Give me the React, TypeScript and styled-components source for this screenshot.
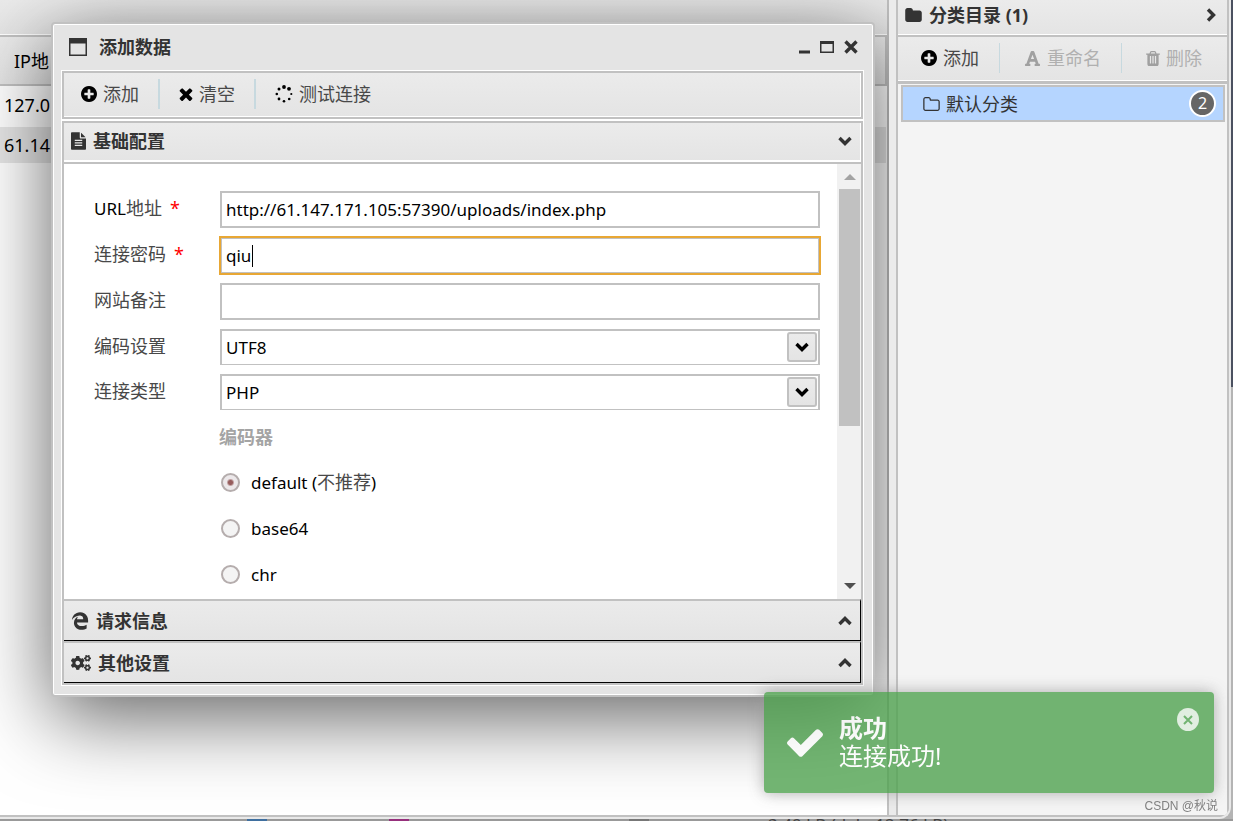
import React from 'react';
import styled, { createGlobalStyle, css } from 'styled-components';
import { FaCogs, FaEdgeLegacy, FaFont } from 'react-icons/fa';

const line = '#c1c1c1';
const ink = '#333333';
const soft = '#484848';
const chrome = 'linear-gradient(#ebebeb, #e4e4e4)';

const GlobalStyle = createGlobalStyle`
  *, *::before, *::after { box-sizing: border-box; }
  body {
    margin: 0;
    color: #000;
    font-family: "Noto Sans", "Noto Sans CJK SC", sans-serif;
    font-size: 17px;
    line-height: 24px;
  }
  button, input, select { font: inherit; color: inherit; margin: 0; }
  button { background: none; border: 0; padding: 0; }
`;

/* ---------- icons ---------- */

const paths = {
  plus: 'M1344 960v-128q0-26-19-45t-45-19h-256v-256q0-26-19-45t-45-19h-128q-26 0-45 19t-19 45v256h-256q-26 0-45 19t-19 45v128q0 26 19 45t45 19h256v256q0 26 19 45t45 19h128q26 0 45-19t19-45v-256h256q26 0 45-19t19-45zm320-64q0 209-103 385.500t-279.500 279.500-385.500 103-385.500-103-279.500-279.500-103-385.500 103-385.500 279.500-279.500 385.500-103 385.500 103 279.500 279.500 103 385.500z',
  times: 'M1490 1322q0 40-28 68l-136 136q-28 28-68 28t-68-28l-294-294-294 294q-28 28-68 28t-68-28l-136-136q-28-28-28-68t28-68l294-294-294-294q-28-28-28-68t28-68l136-136q28-28 68-28t68 28l294 294 294-294q28-28 68-28t68 28l136 136q28 28 28 68t-28 68l-294 294 294 294q28 28 28 68z',
  folder: 'M1728 608v704q0 92-66 158t-158 66h-1216q-92 0-158-66t-66-158v-960q0-92 66-158t158-66h320q92 0 158 66t66 158v32h672q92 0 158 66t66 158z',
  folderOpen: 'M1600 1312v-704q0-40-28-68t-68-28h-704q-40 0-68-28t-28-68v-64q0-40-28-68t-68-28h-320q-40 0-68 28t-28 68v960q0 40 28 68t68 28h1216q40 0 68-28t28-68zm128-704v704q0 92-66 158t-158 66h-1216q-92 0-158-66t-66-158v-960q0-92 66-158t158-66h320q92 0 158 66t66 158v32h672q92 0 158 66t66 158z',
  file: 'M1596 476q14 14 28 36h-472v-472q22 14 36 28zm-476 164h544v1056q0 40-28 68t-68 28h-1344q-40 0-68-28t-28-68v-1600q0-40 28-68t68-28h800v544q0 40 28 68t68 28zm160 736v-64q0-14-9-23t-23-9h-704q-14 0-23 9t-9 23v64q0 14 9 23t23 9h704q14 0 23-9t9-23zm0-256v-64q0-14-9-23t-23-9h-704q-14 0-23 9t-9 23v64q0 14 9 23t23 9h704q14 0 23-9t9-23zm0-256v-64q0-14-9-23t-23-9h-704q-14 0-23 9t-9 23v64q0 14 9 23t23 9h704q14 0 23-9t9-23z',
  trash: 'M704 1376v-704q0-14-9-23t-23-9h-64q-14 0-23 9t-9 23v704q0 14 9 23t23 9h64q14 0 23-9t9-23zm256 0v-704q0-14-9-23t-23-9h-64q-14 0-23 9t-9 23v704q0 14 9 23t23 9h64q14 0 23-9t9-23zm256 0v-704q0-14-9-23t-23-9h-64q-14 0-23 9t-9 23v704q0 14 9 23t23 9h64q14 0 23-9t9-23zm-544-992h448l-48-117q-7-9-17-11h-317q-10 2-17 11zm928 32v64q0 14-9 23t-23 9h-96v948q0 83-47 143.500t-113 60.500h-832q-66 0-113-58.500t-47-141.500v-952h-96q-14 0-23-9t-9-23v-64q0-14 9-23t23-9h309l70-167q15-37 54-63t79-26h320q40 0 79 26t54 63l70 167h309q14 0 23 9t9 23z',
  check: 'M1671 566q0 40-28 68l-724 724-136 136q-28 28-68 28t-68-28l-136-136-362-362q-28-28-28-68t28-68l136-136q28-28 68-28t68 28l294 295 656-657q28-28 68-28t68 28l136 136q28 28 28 68z',
};

const boxes: Record<keyof typeof paths, string> = {
  plus: '128 128 1536 1536',
  times: '302 238 1188 1316',
  folder: '64 128 1664 1408',
  folderOpen: '64 128 1664 1408',
  file: '128 0 1536 1792',
  trash: '192 128 1408 1536',
  check: '121 334 1550 1188',
};

const Svg = styled.svg`
  display: block;
  flex: none;
`;

function Icon({ name, w, h }: { name: keyof typeof paths; w: number; h: number }) {
  return (
    <Svg width={w} height={h} viewBox={boxes[name]} fill="currentColor" aria-hidden="true">
      <path fillRule="evenodd" d={paths[name]} />
    </Svg>
  );
}

function Chevron({ turn = 0 }: { turn?: number }) {
  return (
    <Svg width="14" height="14" viewBox="0 0 14 14" aria-hidden="true">
      <path d="M1.500 4 L7 9.500 L12.500 4" fill="none" stroke="currentColor" strokeWidth="3.400" transform={`rotate(${turn} 7 7)`} />
    </Svg>
  );
}

function Spinner() {
  const dots = [
    [9, 2, 1.900], [14, 3.800, 1.900], [16.300, 9, 1.100], [14.200, 14, 1.300], [9, 16.200, 1.300],
    [4, 14, 1.400], [1.800, 9, 1.300], [4, 4, 1.500],
  ];
  return (
    <Svg width="18" height="18" viewBox="0 0 18 18" fill="currentColor" aria-hidden="true">
      {dots.map(([x, y, r]) => <circle key={`${x}-${y}`} cx={x} cy={y} r={r} />)}
    </Svg>
  );
}

/* ---------- page frame ---------- */

const Backdrop = styled.div`
  display: flex;
  flex-direction: column;
  min-height: 100vh;
  padding-right: 2px;
  background: linear-gradient(#4b5160 387px, #b4b4b4 387px);
`;

const Frame = styled.main`
  display: flex;
  flex: 1;
  border: solid #e9e9e9;
  border-width: 0 2px 2px 0;
  border-bottom-right-radius: 12px;
  overflow: hidden;
`;

const Panes = styled.div`
  display: flex;
  flex: 1;
  min-width: 0;
  border: solid ${line};
  border-width: 0 2px 2px 0;
  border-bottom-right-radius: 2px;
  background: #ebebeb;
`;

const StatusStrip = styled.footer`
  display: flex;
  align-items: flex-start;
  height: 2px;
  margin-right: -2px;
  padding-left: 247px;
  overflow: hidden;
  background: #999;
  color: #444;
  line-height: 12px;
`;

const StatusMark = styled.span<{ $color: string; $gap: number }>`
  width: 20px;
  height: 2px;
  margin-right: ${p => p.$gap}px;
  background: ${p => p.$color};
`;

/* ---------- shell list ---------- */

const ListArea = styled.section`
  position: relative;
  flex: 1;
  min-width: 0;
  display: flex;
  overflow: hidden;
`;

const ListPane = styled.div`
  flex: 1;
  border-right: 2px solid ${line};
  background: #fff;
`;

const TitleBar = styled.div`
  display: flex;
  align-items: center;
  height: 37px;
  padding: 0 9px 6px 7px;
  gap: 7px;
  border-bottom: 2px solid ${line};
  box-shadow: inset 0 -1px #fff;
  background: ${chrome};
  color: ${ink};
  font-size: 18px;
  font-weight: 700;
`;

const Grid = styled.table`
  width: 100%;
  border-collapse: collapse;
  font-size: 18px;
`;

const GridHead = styled.th`
  height: 48px;
  padding: 0 0 0 14px;
  border: solid ${line};
  border-width: 0 2px 2px 0;
  background: ${chrome};
  font-weight: 400;
  text-align: left;
`;

const GridCell = styled.td<{ $odd?: boolean }>`
  height: ${p => (p.$odd ? 36 : 42)}px;
  padding: 0 4px ${p => (p.$odd ? 0 : 4)}px;
  background: ${p => (p.$odd ? '#e6e6e6' : '#fff')};
`;

/* ---------- category sidebar ---------- */

const Sidebar = styled.aside`
  width: 331px;
  margin-left: 7px;
  border-left: 2px solid ${line};
  background: #f4f4f4;
`;

const Grow = styled.span`
  flex: 1;
`;

const SideTools = styled.div`
  display: flex;
  align-items: center;
  height: 47px;
  padding: 0 0 2px 23px;
  border-bottom: 3px solid ${line};
  box-shadow: inset 0 -1px #fff;
  background: ${chrome};
`;

const Rule = styled.span`
  width: 2px;
  height: 30px;
  background: #c7d9df;
`;

const SideRule = styled(Rule)`
  width: 1px;
  margin: 0 24px 0 20px;
`;

const ToolButton = styled.button`
  display: flex;
  align-items: center;
  gap: 6px;
  color: #000;
  font-size: 18px;
  &:disabled { color: #a0a0a0; }
`;

const ToolText = styled.span`
  color: ${soft};
  ${ToolButton}:disabled & { color: #b0b0b0; }
`;

const Category = styled.a`
  display: flex;
  align-items: center;
  gap: 6px;
  height: 37px;
  margin: 1px 2px 0 3px;
  padding: 0 7px 0 20px;
  border: 2px solid ${line};
  background: #b5d5ff;
  color: ${ink};
  font-size: 18px;
  text-decoration: none;
`;

const Count = styled.span`
  width: 27px;
  height: 27px;
  border: 2px solid #fff;
  border-radius: 50%;
  background: #666;
  color: #fff;
  font-size: 16px;
  line-height: 23px;
  text-align: center;
`;

/* ---------- window ---------- */

const Window = styled.div`
  position: absolute;
  top: 22px;
  left: 51px;
  right: 14px;
  padding: 0 9px 9px 8px;
  border: 2px solid ${line};
  border-radius: 4px;
  background: #e4e4e4;
  box-shadow: inset 0 0 0 1px #fff, 0 20px 80px rgba(0, 0, 0, 0.62);
`;

const WindowHead = styled.header`
  display: flex;
  align-items: center;
  height: 46px;
  padding: 0 6px 0 8px;
  gap: 12px;
  color: ${ink};
  font-size: 18px;
  font-weight: 700;
`;

const WindowButton = styled.button`
  display: flex;
  align-items: center;
  color: ${ink};
`;

const WindowControls = styled.div`
  display: flex;
  align-items: center;
  gap: 10px;
  margin-left: auto;
`;

const WindowBody = styled.div`
  padding: 1px;
  background: #fff;
`;

const Toolbar = styled.div`
  display: flex;
  align-items: center;
  height: 48px;
  margin-bottom: 2px;
  padding: 0 17px 2px;
  gap: 19px;
  border: 2px solid ${line};
  box-shadow: inset -1px -1px #fff;
  background: ${chrome};
`;

const Accordion = styled.div`
  border: 2px solid ${line};
  border-top: 0;
`;

const SectionHead = styled.button<{ $open?: boolean }>`
  display: flex;
  align-items: center;
  width: 100%;
  gap: 7px;
  border-top: 2px solid ${line};
  background: ${chrome};
  color: ${ink};
  font-size: 18px;
  font-weight: 700;
  ${p => p.$open
    ? css`
        height: 43px;
        padding: 0 9px 4px 7px;
        border-bottom: 2px solid ${line};
        box-shadow: inset -1px -2px #fff;
      `
    : css`
        height: 42px;
        padding: 0 8px 0 7px;
        border-right: 1px solid #000;
        border-bottom: 1px solid #000;
      `}
`;

const SectionBody = styled.div`
  display: flex;
  height: 435px;
  overflow: hidden;
  background: #fff;
`;

const Form = styled.form`
  display: flex;
  flex: 1;
  flex-direction: column;
  gap: 9px;
  padding: 27px 17px 0 30px;
`;

const Field = styled.div<{ $h: number }>`
  display: grid;
  grid-template-columns: 126px 1fr;
  flex: none;
  align-items: center;
  height: ${p => p.$h}px;
`;

const Label = styled.label`
  padding-bottom: 3px;
  color: ${soft};
  font-size: 18px;
`;

const Latin = styled.span`
  color: #000;
  font-size: 17px;
`;

const Star = styled.span`
  margin-left: 8px;
  color: #f00;
`;

const InputWrap = styled.div`
  position: relative;
`;

const TextBox = styled.input<{ $active?: boolean }>`
  display: block;
  width: 100%;
  height: 37px;
  padding: 0 4px;
  border: 2px solid ${line};
  border-radius: 0;
  background: #fff;
  caret-color: transparent;
  outline: ${p => (p.$active ? '2px solid #e8a734' : 'none')};
  outline-offset: -1px;
  font-size: 17px;
`;

const Caret = styled.span`
  position: absolute;
  top: 8px;
  left: 32px;
  width: 1px;
  height: 22px;
  background: #000;
`;

const SelectBox = styled.div`
  position: relative;
`;

const Select = styled.select`
  display: block;
  width: 100%;
  height: 36px;
  padding: 0 4px;
  border: 2px solid ${line};
  border-bottom-width: 1px;
  border-radius: 0;
  background: #fff;
  appearance: none;
  font-size: 17px;
`;

const SelectArrow = styled.span`
  position: absolute;
  top: 3px;
  right: 3px;
  display: flex;
  align-items: center;
  justify-content: center;
  width: 30px;
  height: 30px;
  border: 2px solid ${line};
  border-radius: 3px;
  background: ${chrome};
  pointer-events: none;
`;

const GroupTitle = styled.div`
  flex: none;
  height: 37px;
  padding-left: 125px;
  color: #a4a4a4;
  font-size: 18px;
  font-weight: 700;
  line-height: 37px;
`;

const RadioRow = styled.label`
  display: flex;
  align-items: center;
  flex: none;
  gap: 11px;
  height: 37px;
  padding: 0 0 2px 127px;
`;

const RadioNote = styled.span`
  color: ${soft};
  font-size: 18px;
`;

const Radio = styled.input`
  appearance: none;
  width: 19px;
  height: 19px;
  margin: 0;
  border: 2px solid #b5adad;
  border-radius: 50%;
  background: #f4f4f4;
  &:checked { background: radial-gradient(circle, #965c5c 2px, #ece8ea 4px); }
`;

const ScrollTrack = styled.div`
  display: flex;
  flex-direction: column;
  align-items: center;
  width: 25px;
  margin-right: -1px;
  padding: 10px 0;
  background: #f1f1f1;
`;

const ScrollThumb = styled.div`
  width: 21px;
  height: 237px;
  margin: 9px 0 auto;
  background: ${line};
`;

const ScrollArrow = styled.span<{ $up?: boolean }>`
  border: 6px solid transparent;
  ${p => p.$up
    ? css`border-top: 0; border-bottom-color: #a3a3a3;`
    : css`border-bottom: 0; border-top-color: #505050;`}
`;

/* ---------- toast ---------- */

const Toast = styled.div`
  position: fixed;
  right: 19px;
  bottom: 28px;
  display: flex;
  align-items: center;
  width: 450px;
  height: 101px;
  padding: 0 15px 0 23px;
  gap: 16px;
  border-radius: 4px;
  background: #51a351;
  box-shadow: 0 0 15px #999;
  color: #fff;
  font-size: 24px;
  line-height: 28px;
  opacity: 0.8;
`;

const ToastText = styled.div`
  padding-bottom: 2px;
`;

const ToastTitle = styled.strong`
  display: block;
`;

const ToastClose = styled.button`
  display: flex;
  align-items: center;
  justify-content: center;
  align-self: flex-start;
  width: 22px;
  height: 23px;
  margin: 16px 0 0 auto;
  border-radius: 50%;
  background: rgba(255, 255, 255, 0.8);
  color: #51a351;
`;

const Credit = styled.div`
  position: fixed;
  right: 15px;
  bottom: 7px;
  color: #808080;
  font-family: "Liberation Sans", "Noto Sans CJK SC", sans-serif;
  font-size: 12px;
  line-height: 16px;
`;

function SelectField({ id, label, value }: { id: string; label: string; value: string }) {
  return (
    <Field $h={36}>
      <Label htmlFor={id}>{label}</Label>
      <SelectBox>
        <Select id={id} defaultValue={value}><option>{value}</option></Select>
        <SelectArrow><Chevron /></SelectArrow>
      </SelectBox>
    </Field>
  );
}

function AddWindow() {
  return (
    <Window role="dialog" aria-label="添加数据">
      <WindowHead>
        <Svg width="18" height="18" viewBox="0 0 18 18" aria-hidden="true">
          <path d="M0 0h18v18H0z M1.500 5.500v11h15v-11z" fill="currentColor" fillRule="evenodd" />
        </Svg>
        添加数据
        <WindowControls>
          <WindowButton aria-label="最小化">
            <Svg width="12" height="14"><path d="M1 10.500h11v3H1z" fill="currentColor" /></Svg>
          </WindowButton>
          <WindowButton aria-label="最大化">
            <Svg width="14" height="14"><path d="M0 1h14v12H0z M1.500 4v7.500h11V4z" fill="currentColor" fillRule="evenodd" /></Svg>
          </WindowButton>
          <WindowButton aria-label="关闭">
            <Svg width="14" height="14"><path d="M1.500 1.500l11 11M12.500 1.500l-11 11" stroke="currentColor" strokeWidth="3.400" /></Svg>
          </WindowButton>
        </WindowControls>
      </WindowHead>
      <WindowBody>
        <Toolbar>
          <ToolButton><Icon name="plus" w={16} h={16} /><ToolText>添加</ToolText></ToolButton>
          <Rule />
          <ToolButton><Icon name="times" w={14} h={14} /><ToolText>清空</ToolText></ToolButton>
          <Rule />
          <ToolButton><Spinner /><ToolText>测试连接</ToolText></ToolButton>
        </Toolbar>
        <Accordion>
          <SectionHead $open><Icon name="file" w={15} h={18} />基础配置<Grow /><Chevron /></SectionHead>
          <SectionBody>
            <Form>
              <Field $h={37}>
                <Label htmlFor="url"><Latin>URL</Latin>地址<Star>*</Star></Label>
                <TextBox id="url" defaultValue="http://61.147.171.105:57390/uploads/index.php" />
              </Field>
              <Field $h={37}>
                <Label htmlFor="pwd">连接密码<Star>*</Star></Label>
                <InputWrap>
                  <TextBox id="pwd" $active defaultValue="qiu" />
                  <Caret />
                </InputWrap>
              </Field>
              <Field $h={37}>
                <Label htmlFor="note">网站备注</Label>
                <TextBox id="note" />
              </Field>
              <SelectField id="encode" label="编码设置" value="UTF8" />
              <SelectField id="type" label="连接类型" value="PHP" />
              <GroupTitle>编码器</GroupTitle>
              <RadioRow>
                <Radio type="radio" name="encoder" defaultChecked />
                <span>default (<RadioNote>不推荐</RadioNote>)</span>
              </RadioRow>
              <RadioRow><Radio type="radio" name="encoder" />base64</RadioRow>
              <RadioRow><Radio type="radio" name="encoder" />chr</RadioRow>
            </Form>
            <ScrollTrack>
              <ScrollArrow $up />
              <ScrollThumb />
              <ScrollArrow />
            </ScrollTrack>
          </SectionBody>
          <SectionHead><FaEdgeLegacy size={18} />请求信息<Grow /><Chevron turn={180} /></SectionHead>
          <SectionHead><FaCogs size={20} />其他设置<Grow /><Chevron turn={180} /></SectionHead>
        </Accordion>
      </WindowBody>
    </Window>
  );
}

export default function App() {
  return (
    <>
      <GlobalStyle />
      <Backdrop>
        <Frame>
          <Panes>
            <ListArea>
              <ListPane>
                <TitleBar />
                <Grid>
                  <thead><tr><GridHead>IP地</GridHead></tr></thead>
                  <tbody>
                    <tr><GridCell>127.0</GridCell></tr>
                    <tr><GridCell $odd>61.14</GridCell></tr>
                  </tbody>
                </Grid>
              </ListPane>
              <AddWindow />
            </ListArea>
            <Sidebar>
              <TitleBar>
                <Icon name="folder" w={17} h={14} />分类目录 (1)<Grow /><Chevron turn={-90} />
              </TitleBar>
              <SideTools>
                <ToolButton><Icon name="plus" w={16} h={16} /><ToolText>添加</ToolText></ToolButton>
                <SideRule />
                <ToolButton disabled><FaFont size={17} /><ToolText>重命名</ToolText></ToolButton>
                <SideRule />
                <ToolButton disabled><Icon name="trash" w={14} h={15} /><ToolText>删除</ToolText></ToolButton>
              </SideTools>
              <Category href="#default">
                <Icon name="folderOpen" w={17} h={14} />默认分类<Grow /><Count>2</Count>
              </Category>
            </Sidebar>
          </Panes>
        </Frame>
        <StatusStrip>
          <StatusMark $color="#3f6f9f" $gap={122} />
          <StatusMark $color="#96307c" $gap={220} />
          <StatusMark $color="#777" $gap={119} />
          3.49 kB (deb: 12.76 kB)
        </StatusStrip>
      </Backdrop>
      <Toast role="status">
        <Icon name="check" w={36} h={28} />
        <ToastText><ToastTitle>成功</ToastTitle>连接成功!</ToastText>
        <ToastClose aria-label="关闭">
          <Svg width="10" height="10"><path d="M1 1l8 8M9 1l-8 8" stroke="currentColor" strokeWidth="2" /></Svg>
        </ToastClose>
      </Toast>
      <Credit>CSDN @秋说</Credit>
    </>
  );
}
